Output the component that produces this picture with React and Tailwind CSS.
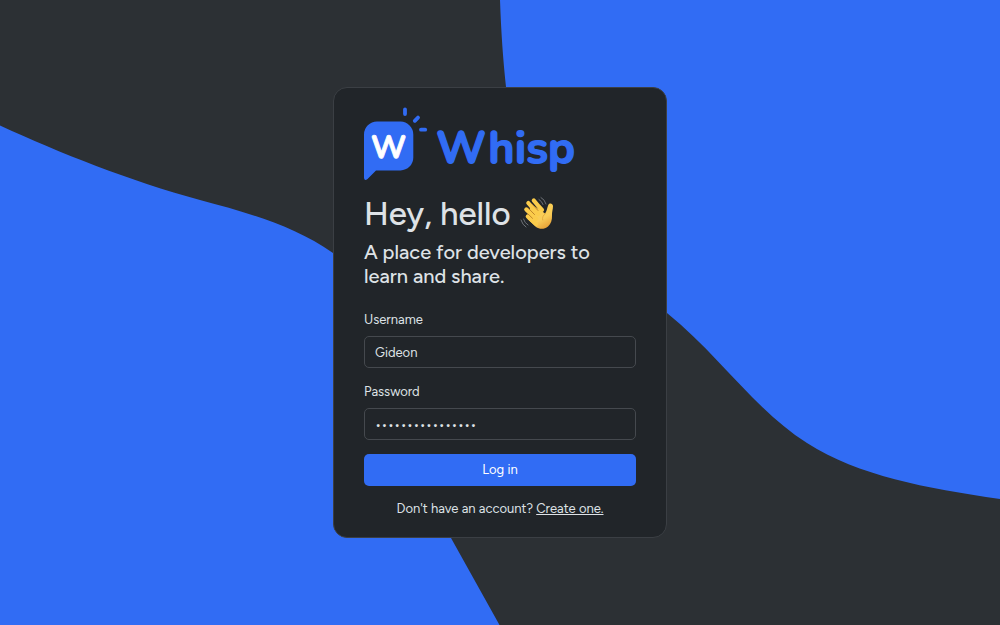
import { useState } from "react";

function Backdrop() {
  return (
    <svg
      aria-hidden="true"
      className="absolute inset-0 h-full w-full"
      viewBox="0 0 1000 625"
      preserveAspectRatio="none"
      fill="#316cf4"
    >
      <path d="M0 125.5C60 153 130 181 200 200C250 213.5 293 225 333 253C420 315 390 420 451 538L499.500 625H0Z" />
      <path d="M500 0C501 30 503 60 506 87C520 200 590 250 667 313C720 356 755 410 807 443C859 476 925 488 1000 499V0Z" />
    </svg>
  );
}

function Logo() {
  return (
    <svg
      role="img"
      aria-label="Whisp"
      className="h-20 w-54 self-start"
      viewBox="0 0 216 80"
      fontFamily="Nunito, Lato, sans-serif"
      textRendering="geometricPrecision"
      strokeLinejoin="round"
      strokeLinecap="round"
    >
      <path
        d="M13 19.500H36.500A13 13 0 0 1 49.300 32.500V55.500A13 13 0 0 1 36.500 68.500H12L3.500 77Q0.500 79.500 0 76V32.500A13 13 0 0 1 13 19.500Z"
        fill="#316cf4"
      />
      <g stroke="#316cf4" strokeWidth="3.800">
        <path d="M41 7.500V12" />
        <path d="M50.800 18.800L54 15.600" />
        <path d="M57 27.700H61.200" />
      </g>
      <text
        x="24.500"
        y="55.500"
        textAnchor="middle"
        fontSize="32"
        fontWeight="700"
        fill="#fff"
        stroke="#fff"
        strokeWidth="0.800"
      >
        W
      </text>
      <text
        x="72"
        y="61"
        fontSize="45"
        fontWeight="700"
        fill="#316cf4"
        stroke="#316cf4"
        strokeWidth="1.300"
      >
        Whisp
      </text>
    </svg>
  );
}

function WavingHand() {
  return (
    <svg role="img" aria-label="waving hand" className="h-9 w-9" viewBox="0 0 36 36" fill="none" strokeLinecap="round">
      <defs>
        <linearGradient id="skin" x1="0" y1="0" x2="0.600" y2="1">
          <stop offset="0" stopColor="#fbcf4c" />
          <stop offset="0.700" stopColor="#f9cd58" />
          <stop offset="1" stopColor="#e9a63a" />
        </linearGradient>
      </defs>
      <path
        d="M12 8L22 14.500L26 17.500C27.800 15.500 28 12 29.300 9C30.500 6.500 33.800 7.300 34 10C34 13.500 32.800 16 33 19.500C33.200 24 32 28 29 30.500C25.500 33.500 20.500 33.500 17 31L8.500 23Z"
        fill="url(#skin)"
      />
      <g stroke="#fbcc4b" strokeWidth="4.200">
        <path d="M14.800 4.500Q18 8.500 23 14" />
        <path d="M9.300 7Q14 12.500 19 18" />
        <path d="M7.300 13.500Q12 18 17 23" />
        <path d="M8.800 20.500L17 28" />
      </g>
      <g stroke="#b97d22" strokeWidth="0.900">
        <path d="M12.800 7.800L19 14.500" />
        <path d="M9 11.800L15.500 18.500" />
        <path d="M9 18L13.500 22.300" />
        <path d="M26.500 17.500C24 19.500 23 21.500 23.700 24" stroke="#dfa238" strokeWidth="0.800" />
      </g>
      <g stroke="#6d7176" strokeWidth="1">
        <path d="M20 3.500Q22.800 5 24 8.500" />
        <path d="M22 1.500Q25.800 3.500 27 8" />
        <path d="M4.500 23Q5.500 27 9 29" />
        <path d="M2 24Q3.500 29 7 31" />
      </g>
    </svg>
  );
}

function Field({ id, label, ...props }) {
  return (
    <div className="flex flex-col gap-1.5">
      <label htmlFor={id} className="leading-5">
        {label}
      </label>
      <input
        id={id}
        className="h-8 w-full rounded-[5px] border border-[#45494e] bg-transparent px-2.5 outline-none focus:border-[#316cf4]"
        {...props}
      />
    </div>
  );
}

export default function App() {
  const [username, setUsername] = useState("Gideon");
  const [password, setPassword] = useState("correcthorsebatt");

  return (
    <div className="relative grid min-h-screen place-items-center bg-[#2c3034] font-['Figtree','Inter',sans-serif] text-[13px] text-[#dee2e6]">
      <Backdrop />
      <main className="relative flex w-full max-w-[334px] flex-col rounded-[14px] border border-[#3b3f44] bg-[#212529] px-[30px] pt-3.5 pb-[18px]">
        <Logo />
        <h1 className="mt-3.5 flex items-center gap-2 text-[33px] leading-9 font-medium">
          Hey, hello <WavingHand />
        </h1>
        <p className="mt-2 text-xl leading-6 font-medium">A place for developers to learn and share.</p>
        <form className="mt-[22px] flex flex-col gap-3.5" onSubmit={(e) => e.preventDefault()}>
          <Field
            id="username"
            label="Username"
            type="text"
            autoComplete="username"
            value={username}
            onChange={(e) => setUsername(e.target.value)}
          />
          <Field
            id="password"
            label="Password"
            type="password"
            autoComplete="current-password"
            value={password}
            onChange={(e) => setPassword(e.target.value)}
          />
          <button type="submit" className="h-8 rounded-[5px] bg-[#316cf4] text-white">
            Log in
          </button>
        </form>
        <p className="mt-[13px] text-center leading-5">
          Don't have an account?{" "}
          <a href="#signup" className="underline">
            Create one.
          </a>
        </p>
      </main>
    </div>
  );
}
